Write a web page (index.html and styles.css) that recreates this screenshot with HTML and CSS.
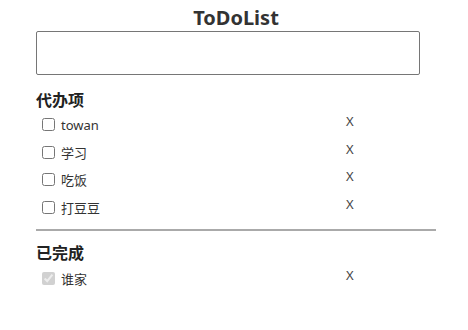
FILE: index.html
```html
<!DOCTYPE html>
<html lang="zh">
<head>
    <meta charset="UTF-8">
    <title>ToDoList</title>
    <link rel="stylesheet" href="styles.css">
</head>
<body>
    <div class="container">
        <h1>ToDoList</h1>
        <input type="text" class="new-todo">
        <h2>代办项</h2>
        <ul class="todo-list">
            <li><label><input type="checkbox"> towan</label><span class="del">X</span></li>
            <li><label><input type="checkbox"> 学习</label><span class="del">X</span></li>
            <li><label><input type="checkbox"> 吃饭</label><span class="del">X</span></li>
            <li><label><input type="checkbox"> 打豆豆</label><span class="del">X</span></li>
        </ul>
        <hr>
        <h2 class="done-title">已完成</h2>
        <ul class="todo-list done-list">
            <li><label><input type="checkbox" checked disabled> 谁家</label><span class="del">X</span></li>
        </ul>
    </div>
</body>
</html>
```

FILE: styles.css
```css
* {
    box-sizing: border-box;
    margin: 0;
    padding: 0;
}

body {
    font-family: "Noto Sans", "Noto Sans CJK SC", sans-serif;
    color: #333;
    background: #fff;
}

.container {
    width: 400px;
    margin-left: 36px;
    padding-top: 5px;
}

h1 {
    font-size: 20px;
    line-height: 26px;
    text-align: center;
    color: #333;
}

.new-todo {
    display: block;
    width: 384px;
    height: 44px;
    border: 1px solid #767676;
    border-radius: 2px;
    outline: none;
}

h2 {
    font-size: 16px;
    font-weight: 600;
    color: #222;
    margin-top: 14px;
    line-height: 22px;
}

.done-title {
    margin-top: 11px;
}

.todo-list {
    list-style: none;
}

.done-list {
    margin-top: 1px;
}

.todo-list li {
    display: flex;
    height: 27.5px;
    padding-left: 6px;
    font-size: 13px;
    align-items: center;
}

.todo-list label {
    width: 304px;
    display: flex;
    align-items: center;
    gap: 6px;
}

.todo-list input {
    width: 13px;
    height: 13px;
    margin: 0;
}

.del {
    color: #444;
    align-self: flex-start;
    padding-top: 1px;
}

hr {
    border: none;
    border-top: 2px solid #aaa;
    margin-top: 8px;
}
```
